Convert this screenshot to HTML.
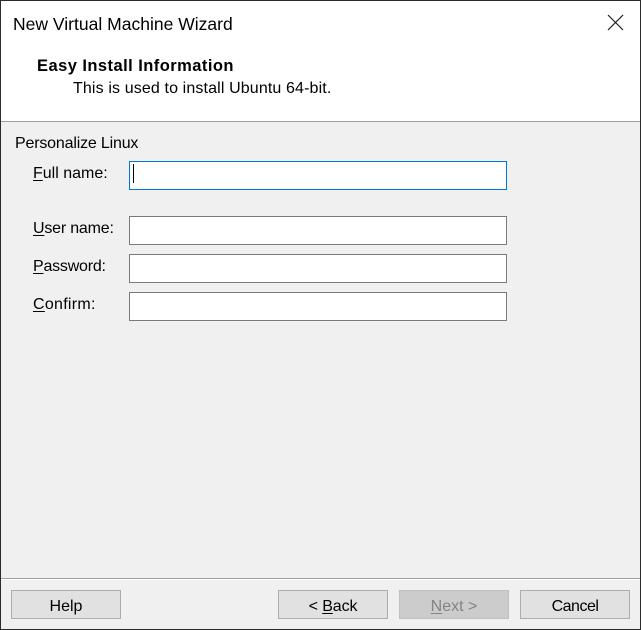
<!DOCTYPE html>
<html><head><meta charset="utf-8"><style>
html,body{margin:0;padding:0}
body{width:641px;height:630px;overflow:hidden;position:relative;background:#f0f0f0;font-family:"Liberation Sans",sans-serif;font-size:16px;color:#000}
.a{position:absolute;white-space:nowrap;line-height:20px}
.box{position:absolute;box-sizing:border-box}
.in{position:absolute;box-sizing:border-box;left:129px;width:378px;height:29px;background:#fff;border:1px solid #7a7a7a}
.btn{position:absolute;box-sizing:border-box;top:590px;width:110px;height:29px;background:#e1e1e1;border:1px solid #adadad;text-align:center;line-height:29px;font-size:16px;padding-top:1px}
u{text-underline-offset:2px}
</style></head><body>
<div class="box" style="left:0;top:0;width:641px;height:122px;background:#fff"></div>
<div class="box" style="left:0;top:121px;width:641px;height:1px;background:#a0a0a0"></div>
<div class="a" style="left:13px;top:14px;font-size:17.5px;letter-spacing:.01px">New Virtual Machine Wizard</div>
<svg class="box" style="left:607px;top:14px" width="18" height="18" viewBox="0 0 18 18"><path d="M1 1L16 16M16 1L1 16" stroke="#111" stroke-width="1.1" fill="none"/></svg>
<div class="a" style="left:37px;top:56px;font-weight:bold;font-size:16.5px;letter-spacing:.45px">Easy Install Information</div>
<div class="a" style="left:73px;top:79px;letter-spacing:.13px">This is used to install Ubuntu 64-bit.</div>
<div class="a" style="left:15px;top:134px;letter-spacing:-.18px">Personalize Linux</div>
<div class="a" style="left:33px;top:164px"><u>F</u>ull name:</div>
<div class="in" style="top:161px;border-color:#0078d7"></div>
<div class="box" style="left:133px;top:164px;width:1px;height:19px;background:#000"></div>
<div class="a" style="left:33px;top:219px;letter-spacing:-.2px"><u>U</u>ser name:</div>
<div class="in" style="top:216px"></div>
<div class="a" style="left:33px;top:257px;letter-spacing:-.22px"><u>P</u>assword:</div>
<div class="in" style="top:254px"></div>
<div class="a" style="left:33px;top:295px;letter-spacing:.28px"><u>C</u>onfirm:</div>
<div class="in" style="top:292px"></div>
<div class="box" style="left:0;top:578px;width:641px;height:1px;background:#a0a0a0"></div>
<div class="box" style="left:0;top:579px;width:641px;height:1px;background:#fff"></div>
<div class="btn" style="left:11px">Help</div>
<div class="btn" style="left:278px;letter-spacing:-.1px">&lt; <u>B</u>ack</div>
<div class="btn" style="left:399px;background:#ccc;border-color:#bfbfbf;color:#838383"><u>N</u>ext &gt;</div>
<div class="btn" style="left:520px;letter-spacing:-.5px">Cancel</div>
<div class="box" style="left:0;top:0;width:641px;height:630px;border:1px solid #2b2b2b"></div>
</body></html>
